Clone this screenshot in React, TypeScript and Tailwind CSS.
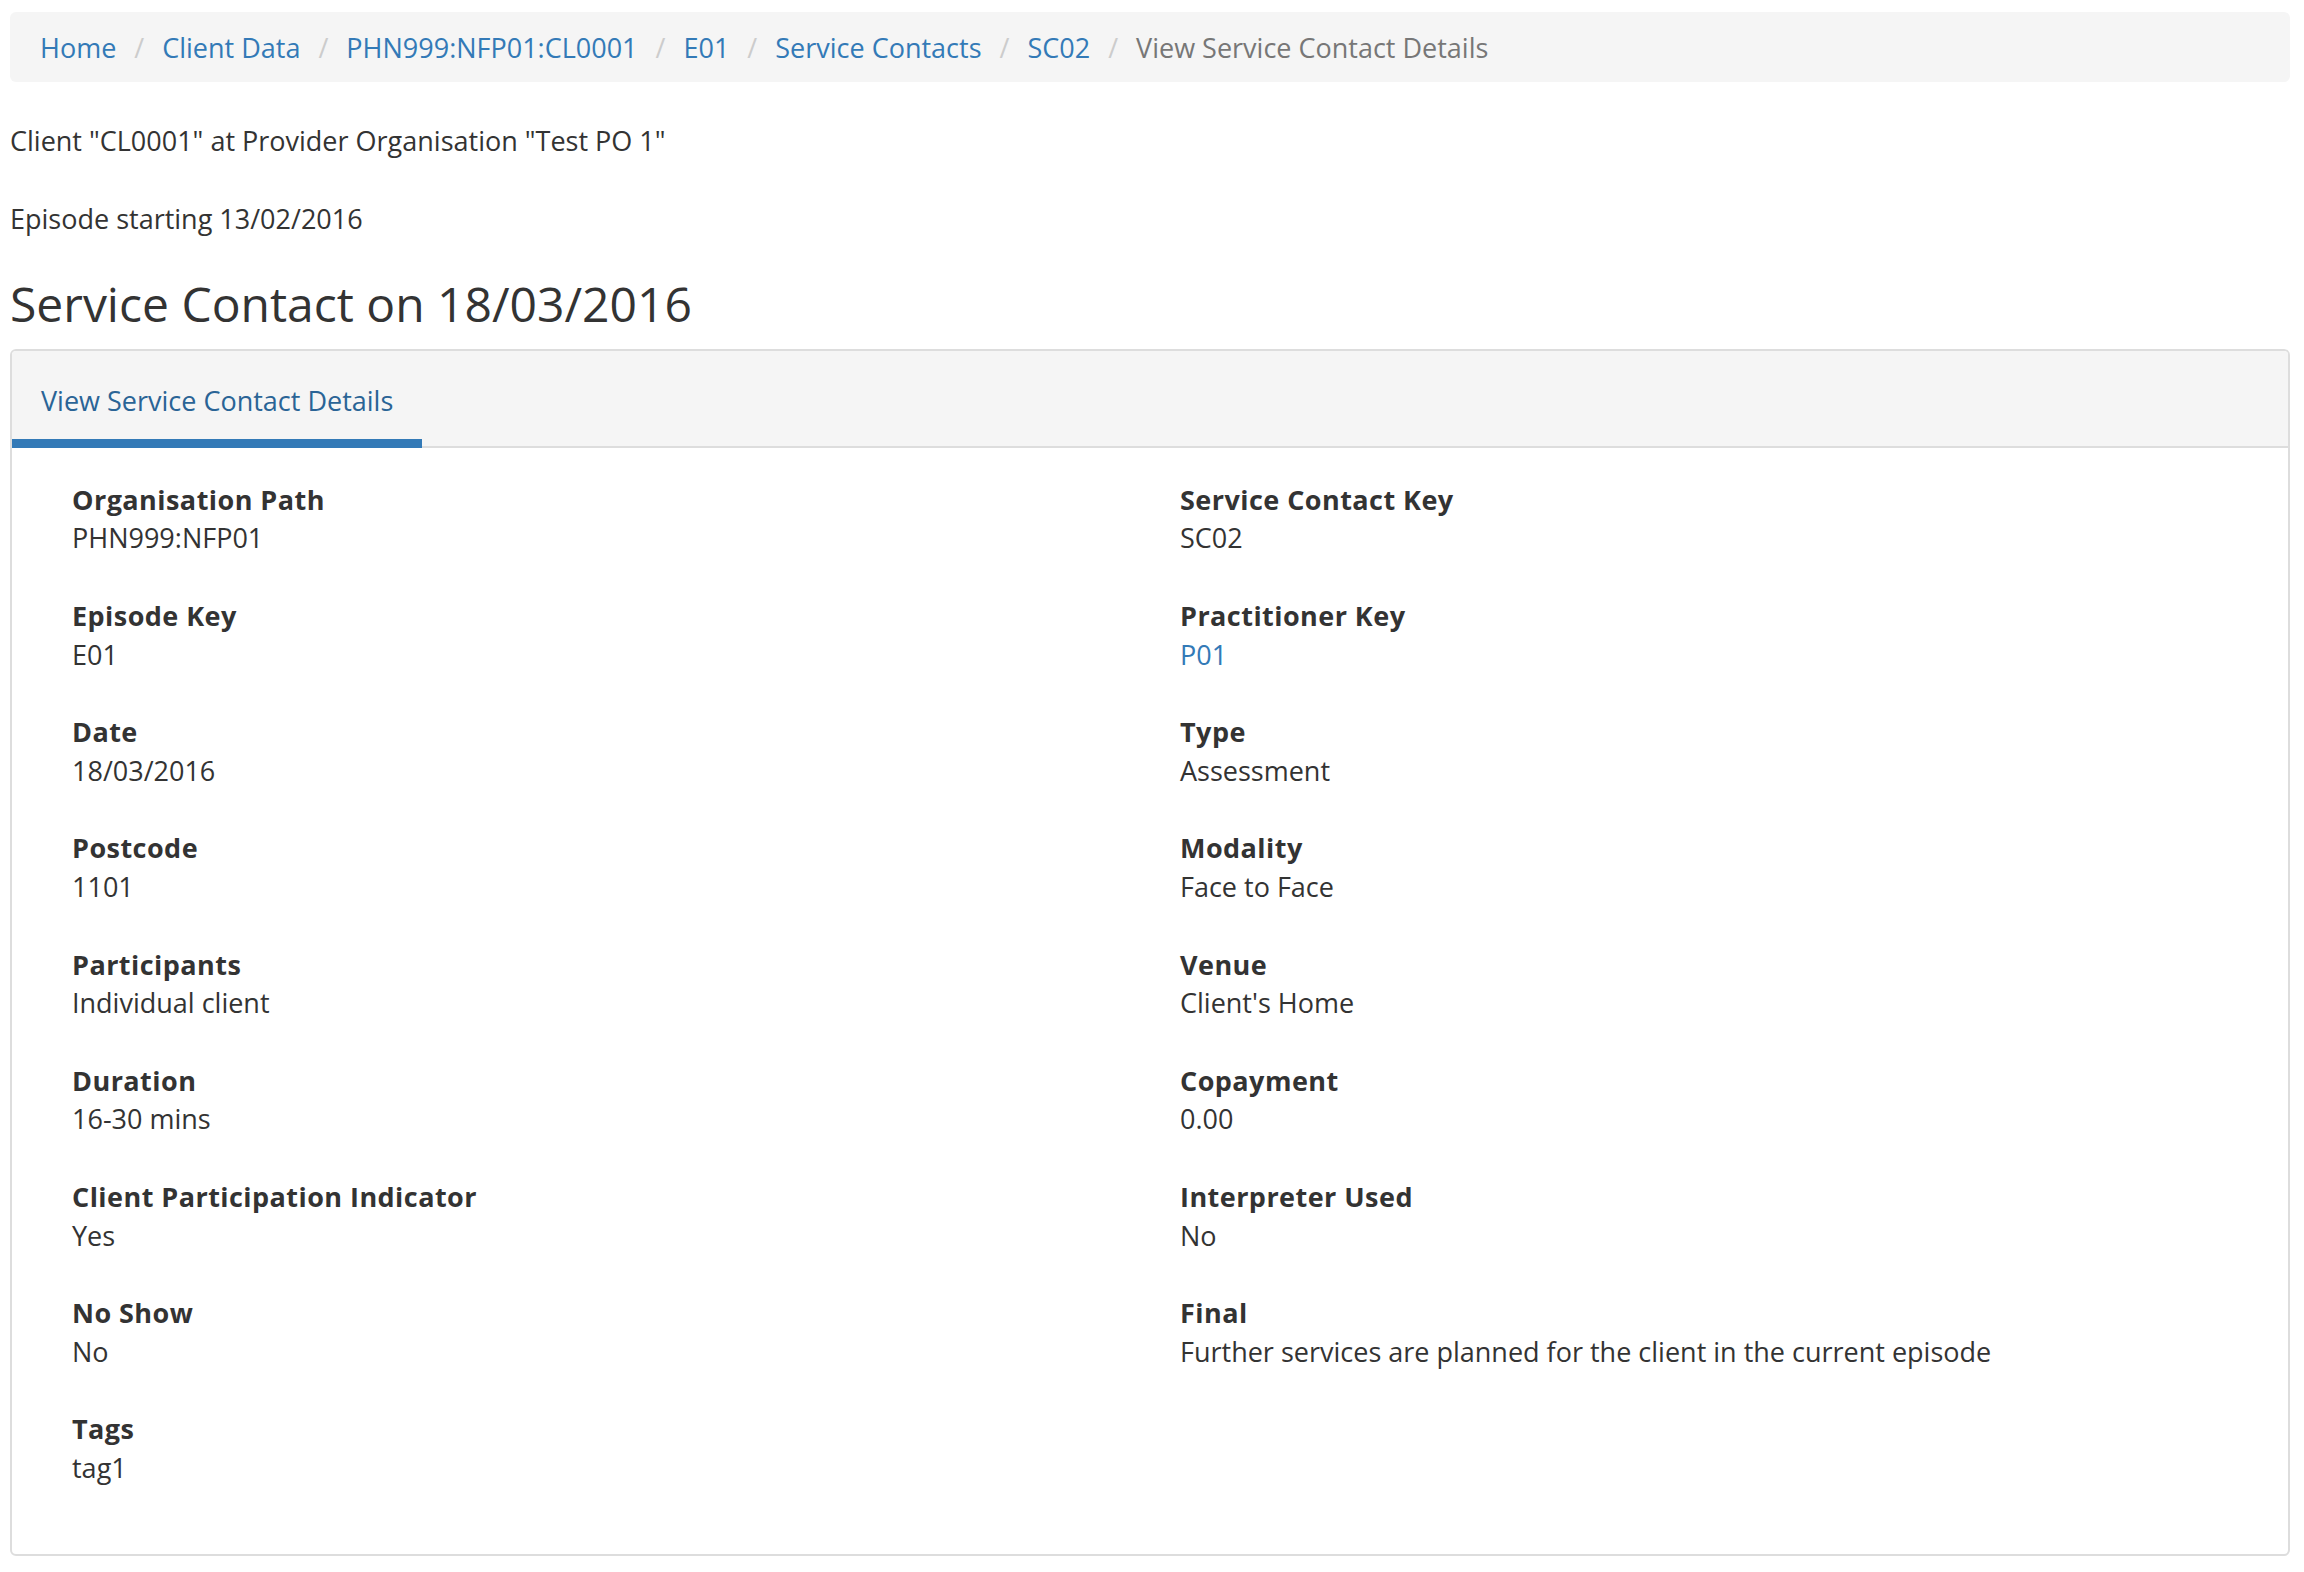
import React from "react";

const crumbs = [
  "Home",
  "Client Data",
  "PHN999:NFP01:CL0001",
  "E01",
  "Service Contacts",
  "SC02",
];

type Field = { label: string; value: string; link?: boolean };

const left: Field[] = [
  { label: "Organisation Path", value: "PHN999:NFP01" },
  { label: "Episode Key", value: "E01" },
  { label: "Date", value: "18/03/2016" },
  { label: "Postcode", value: "1101" },
  { label: "Participants", value: "Individual client" },
  { label: "Duration", value: "16-30 mins" },
  { label: "Client Participation Indicator", value: "Yes" },
  { label: "No Show", value: "No" },
  { label: "Tags", value: "tag1" },
];

const right: Field[] = [
  { label: "Service Contact Key", value: "SC02" },
  { label: "Practitioner Key", value: "P01", link: true },
  { label: "Type", value: "Assessment" },
  { label: "Modality", value: "Face to Face" },
  { label: "Venue", value: "Client's Home" },
  { label: "Copayment", value: "0.00" },
  { label: "Interpreter Used", value: "No" },
  { label: "Final", value: "Further services are planned for the client in the current episode" },
];

function FieldList({ items }: { items: Field[] }) {
  return (
    <div className="px-[30px]">
      {items.map((f) => (
        <div key={f.label} className="mb-[39px]">
          <div className="font-bold tracking-[0.45px]">{f.label}</div>
          <div className={f.link ? "text-[#337ab7]" : ""}>{f.value}</div>
        </div>
      ))}
    </div>
  );
}

export default function App() {
  return (
    <div className="min-h-[1572px] bg-white pl-[10px] pr-[14px] pt-[12px] font-['Open_Sans',sans-serif] text-[27px] leading-[38.6px] text-[#333]">
      <nav className="flex h-[70px] items-center rounded-[6px] bg-[#f5f5f5] px-[30px] pt-[2px]">
        {crumbs.map((c) => (
          <React.Fragment key={c}>
            <span className="text-[#337ab7]">{c}</span>
            <span className="px-[18px] text-[#ccc]">/</span>
          </React.Fragment>
        ))}
        <span className="text-[#777]">View Service Contact Details</span>
      </nav>

      <p className="mt-[40px] mb-[39px]">Client "CL0001" at Provider Organisation "Test PO 1"</p>
      <p className="mb-[39px]">Episode starting 13/02/2016</p>
      <h2 className="mb-[19px] text-[48px] leading-[53px] font-normal">Service Contact on 18/03/2016</h2>

      <div className="rounded-[6px] border-2 border-[#ddd]">
        <div className="flex rounded-t-[4px] border-b-2 border-[#ddd] bg-[#f5f5f5]">
          <div className="-mb-[2px] border-b-[9px] border-[#337ab7] px-[29px] pt-[31px] pb-[18px] text-[#2a6496]">
            View Service Contact Details
          </div>
        </div>
        <div className="grid grid-cols-2 px-[30px] pt-[33px] pb-[28px]">
          <FieldList items={left} />
          <FieldList items={right} />
        </div>
      </div>
    </div>
  );
}
